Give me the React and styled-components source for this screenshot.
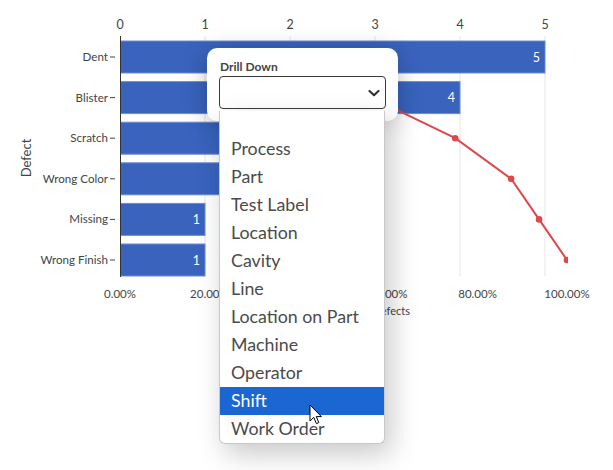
import React from "react";
import styled, { createGlobalStyle } from "styled-components";

const Global = createGlobalStyle`
  html, body { margin: 0; padding: 0; background: #fff; }
  body { font-family: Lato, "Open Sans", sans-serif; }
`;

const Page = styled.div`
  position: relative;
  width: 613px;
  height: 470px;
  overflow: hidden;
  background: #fff;
`;

const ChartSvg = styled.svg`
  display: block;
  font-family: Lato, "Open Sans", sans-serif;
`;

const Card = styled.div`
  position: absolute;
  left: 207px;
  top: 48px;
  width: 191px;
  height: 73px;
  box-sizing: border-box;
  padding: 12px 12px 0 12px;
  background: #fff;
  border-radius: 10px;
  box-shadow: 0 4px 24px rgba(0, 0, 0, 0.26);
  display: flex;
  flex-direction: column;
`;

const Label = styled.div`
  font-size: 12px;
  font-weight: 700;
  color: #444;
  line-height: 14px;
  margin-left: 1px;
`;

const SelectBox = styled.div`
  margin-top: 2px;
  width: 167px;
  height: 33px;
  box-sizing: border-box;
  border: 1px solid #3a3a3a;
  border-radius: 4px;
  display: flex;
  align-items: center;
  justify-content: flex-end;
  padding-right: 4px;
  background: #fff;
`;

const ListBox = styled.div`
  position: absolute;
  left: 219px;
  top: 111px;
  width: 166px;
  box-sizing: border-box;
  background: #fff;
  border: 1px solid #c8c8c8;
  border-top: none;
  border-radius: 0 0 6px 6px;
  box-shadow: 6px 10px 28px rgba(0, 0, 0, 0.22);
  display: flex;
  flex-direction: column;
  overflow: hidden;
`;

const Option = styled.div`
  height: ${(p) => (p.$first ? 24 : 28)}px;
  line-height: 26px;
  padding-left: 11px;
  font-size: 17.8px;
  color: ${(p) => (p.$active ? "#fff" : "#4a4a4a")};
  background: ${(p) => (p.$active ? "#1a66d2" : "transparent")};
  white-space: nowrap;
`;

const Cursor = styled.svg`
  position: absolute;
  left: 309px;
  top: 404px;
`;

const rows = [
  { name: "Dent", v: 5, cum: 5 / 16 },
  { name: "Blister", v: 4, cum: 9 / 16 },
  { name: "Scratch", v: 3, cum: 12 / 16 },
  { name: "Wrong Color", v: 2, cum: 14 / 16 },
  { name: "Missing", v: 1, cum: 15 / 16 },
  { name: "Wrong Finish", v: 1, cum: 16 / 16 },
];

const X0 = 120;
const UNIT = 85;
const PCT = 447;
const rowY = (i) => 57 + i * 40.6;

function Chart() {
  const pts = rows.map((r, i) => [X0 + r.cum * PCT, rowY(i)]);
  return (
    <ChartSvg width="613" height="470" viewBox="0 0 613 470">
      <defs>
        <clipPath id="plot">
          <rect x="118" y="30" width="450" height="250" />
        </clipPath>
      </defs>
      {[0, 1, 2, 3, 4, 5].map((t) => (
        <g key={t}>
          {t > 0 && (
            <line x1={X0 + t * UNIT} x2={X0 + t * UNIT} y1="36" y2="276" stroke="#e6e6e6" strokeWidth="1" />
          )}
          <text x={X0 + t * UNIT} y="29" fontSize="12.5" fill="#444" textAnchor="middle">{t}</text>
        </g>
      ))}
      {rows.map((r, i) => {
        const y = rowY(i);
        const w = r.v * UNIT;
        return (
          <g key={r.name}>
            <rect x={X0 + 0.5} y={y - 16} width={w - 0.5} height="32" fill="#3963bd" stroke="#6d8dd3" strokeWidth="1" />
            <text x={X0 + w - 5} y={y + 4.5} fontSize="12.5" fill="#fff" textAnchor="end">{r.v}</text>
            <text x="108" y={y + 4} fontSize="11.6" fill="#444" textAnchor="end">{r.name}</text>
            <line x1="110" x2="115" y1={y} y2={y} stroke="#444" strokeWidth="1" />
          </g>
        );
      })}
      <line x1={X0 + 0.5} x2={X0 + 0.5} y1="36" y2="277" stroke="#333" strokeWidth="1" />
      <g clipPath="url(#plot)">
        <polyline points={pts.map((p) => p.join(",")).join(" ")} fill="none" stroke="#e0474c" strokeWidth="2" />
        {pts.map((p, i) => (
          <circle key={i} cx={p[0]} cy={p[1]} r="3.3" fill="#e0474c" />
        ))}
      </g>
      {[0, 20, 40, 60, 80, 100].map((p) => (
        <text key={p} x={X0 + (p / 100) * PCT} y="298" fontSize="11.5" fill="#444" textAnchor="middle">
          {p.toFixed(2)}%
        </text>
      ))}
      <text x="410" y="315" fontSize="11" fill="#444" textAnchor="end">% of Defects</text>
      <text transform="translate(31,158) rotate(-90)" fontSize="13" fill="#444" textAnchor="middle">Defect</text>
    </ChartSvg>
  );
}

const options = [
  "",
  "Process",
  "Part",
  "Test Label",
  "Location",
  "Cavity",
  "Line",
  "Location on Part",
  "Machine",
  "Operator",
  "Shift",
  "Work Order",
];

export default function App() {
  return (
    <>
      <Global />
      <Page>
        <Chart />
        <Card>
          <Label>Drill Down</Label>
          <SelectBox>
            <svg width="14" height="10" viewBox="0 0 14 10">
              <path d="M2.5 3 L7 7.2 L11.5 3" fill="none" stroke="#333" strokeWidth="2.2" strokeLinecap="round" strokeLinejoin="round" />
            </svg>
          </SelectBox>
        </Card>
        <ListBox>
          {options.map((o, i) => (
            <Option key={i} $first={i === 0} $active={o === "Shift"}>{o}</Option>
          ))}
        </ListBox>
        <Cursor width="14" height="22" viewBox="0 0 14 22">
          <path d="M1 1 L1 17 L4.8 13.4 L7.4 19.6 L9.8 18.6 L7.3 12.6 L12.4 12.6 Z" fill="#fff" stroke="#000" strokeWidth="1" strokeLinejoin="round" />
        </Cursor>
      </Page>
    </>
  );
}
